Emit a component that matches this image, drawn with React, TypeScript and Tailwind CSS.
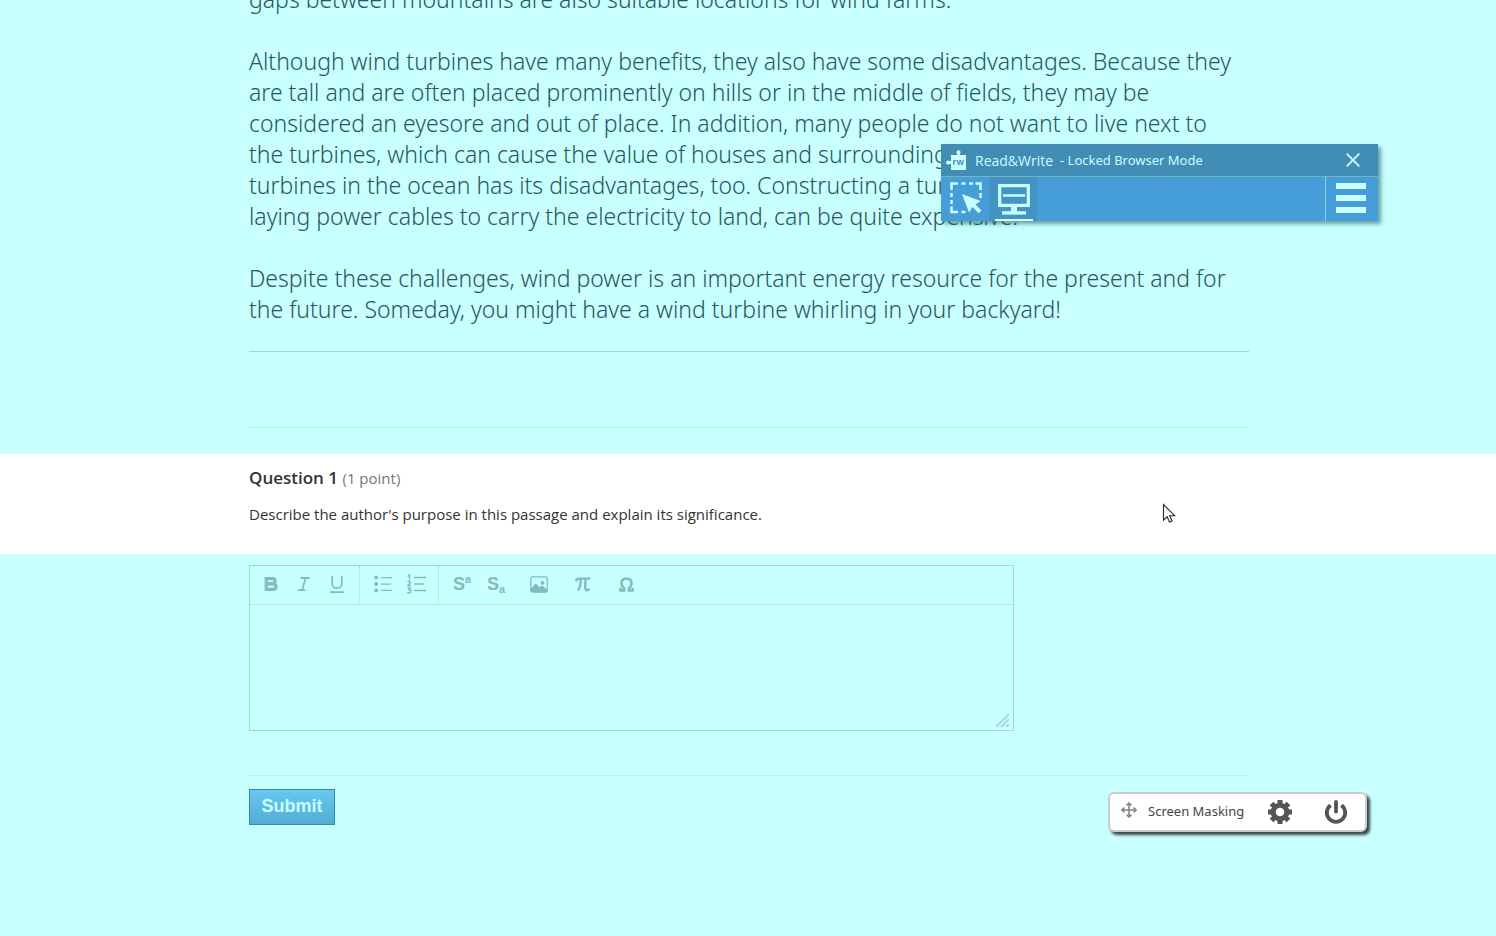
import { useState } from "react";

const paragraphs = [
  ["gaps between mountains are also suitable locations for wind farms."],
  [
    "Although wind turbines have many benefits, they also have some disadvantages. Because they",
    "are tall and are often placed prominently on hills or in the middle of fields, they may be",
    "considered an eyesore and out of place. In addition, many people do not want to live next to",
    "the turbines, which can cause the value of houses and surrounding land to drop. Placing",
    "turbines in the ocean has its disadvantages, too. Constructing a turbine in the ocean, and",
    "laying power cables to carry the electricity to land, can be quite expensive.",
  ],
  [
    "Despite these challenges, wind power is an important energy resource for the present and for",
    "the future. Someday, you might have a wind turbine whirling in your backyard!",
  ],
];

const Passage = () => (
  <article className="-mt-4 flex flex-col gap-[31px] font-['Noto_Sans','Open_Sans',sans-serif] text-[23px] leading-[31px] font-light text-[#28565b]">
    {paragraphs.map((lines, i) => (
      <p key={i} className="whitespace-nowrap">
        {lines.map((line) => (
          <span key={line} className="block">{line}</span>
        ))}
      </p>
    ))}
  </article>
);

const EditorToolbar = () => {
  const iconButton = "flex h-full items-center justify-center";

  return (
    <div className="flex h-[39px] items-stretch border-b border-dotted border-[#a3d6d8] text-[#83babb]">
      <div className="flex w-[110px] items-center border-r border-dotted border-[#a3d6d8] pb-0.5 pl-1">
        <button aria-label="Bold" className={`${iconButton} w-[34px]`}>
          <svg width="16" height="16" viewBox="0 0 16 16" fill="none" stroke="currentColor" strokeWidth="3.2">
            <path d="M3.2 2.7h6.4a2.5 2.5 0 0 1 0 5H4M4 8h6.4a2.6 2.6 0 0 1 0 5.3H3.2M3.2 1.1v13.8" />
          </svg>
        </button>
        <button aria-label="Italic" className={`${iconButton} w-[32px]`}>
          <svg width="14" height="16" viewBox="0 0 14 16" fill="none" stroke="currentColor" strokeWidth="1.8">
            <path d="M3.5 2h9M.5 14.2h8M8.6 2L5.2 14" />
          </svg>
        </button>
        <button aria-label="Underline" className={`${iconButton} w-[34px]`}>
          <svg width="14" height="18" viewBox="0 0 14 18" fill="none" stroke="currentColor" strokeWidth="1.7">
            <path d="M2.2 1v7.4a4.8 4.8 0 0 0 9.6 0V1M0 17.1h14" />
          </svg>
        </button>
      </div>
      <div className="flex w-[79px] items-center border-r border-dotted border-[#a3d6d8] pb-0.5 pl-[5px]">
        <button aria-label="Bulleted list" className={`${iconButton} w-[36px]`}>
          <svg width="18" height="18" viewBox="0 0 18 18" fill="currentColor">
            <circle cx="2.2" cy="2.6" r="2" />
            <circle cx="2.2" cy="9" r="2" />
            <circle cx="2.2" cy="15.4" r="2" />
            <path d="M7 2h11v1.3H7zM7 8.4h10v1.3H7zM7 14.8h11v1.3H7z" />
          </svg>
        </button>
        <button aria-label="Numbered list" className={`${iconButton} w-[31px]`}>
          <svg width="19" height="20" viewBox="0 0 19 20" fill="none" stroke="currentColor" strokeWidth="1.5">
            <path d="M7 3.5h12M7 10h10M7 16.5h12" strokeWidth="1.3" />
            <path d="M.8 1.8l1.7-.8v4.7M.6 7.9c1-1 3.2-.6 2.8.8C3.2 9.7.8 11 .8 11.8h3M.6 14.2h2.8L2 16c2.6-.1 2.4 3-.1 3-.7 0-1.2-.3-1.5-.7" />
          </svg>
        </button>
      </div>
      <div className="flex items-center pb-0.5 pl-1.5 font-['Liberation_Sans',Arial,sans-serif]">
        <button aria-label="Superscript" className={`${iconButton} w-[34px]`}>
          <span className="text-lg leading-5 font-bold">S</span>
          <span className="self-start pt-[7px] text-[11px] leading-3 font-bold">a</span>
        </button>
        <button aria-label="Subscript" className={`${iconButton} w-[34px]`}>
          <span className="text-lg leading-5 font-bold">S</span>
          <span className="self-end pb-[7px] text-[11px] leading-3 font-bold">a</span>
        </button>
        <button aria-label="Insert image" className={`${iconButton} w-[52px]`}>
          <svg width="18" height="17" viewBox="0 0 18 17">
            <rect x=".8" y=".8" width="16.4" height="15.4" rx="2" fill="none" stroke="currentColor" strokeWidth="1.3" />
            <circle cx="12.6" cy="6.8" r="1.9" fill="currentColor" />
            <path d="M1 12.5L5.8 7.6l3.8 3.7 2.4-2 5 4.2v1.7c0 .6-.5 1-1 1H2c-.6 0-1-.4-1-1z" fill="currentColor" />
          </svg>
        </button>
        <button aria-label="Insert equation" className={`${iconButton} w-9`}>
          <svg width="16" height="15" viewBox="0 0 16 15" fill="none" stroke="currentColor" strokeWidth="2.3">
            <path d="M1 4.4C1.4 2.3 2.3 1.6 4 1.6h11.4M5.7 1.8c0 5.5-.6 9.3-2.7 11.8M10.6 1.8c-.3 5.2-.6 8.6-.2 10.3.4 1.8 3 1.8 4-.6" />
          </svg>
        </button>
        <button aria-label="Insert symbol" className={`${iconButton} w-[50px]`}>
          <svg width="15" height="15" viewBox="0 0 15 15" fill="none" stroke="currentColor" strokeWidth="2.5">
            <path d="M1.4 11v2.4h3.8v-2.2C3.5 10.2 2.5 8.4 2.5 6.3c0-3 2-4.9 5-4.9s5 1.9 5 4.9c0 2.1-1 3.9-2.7 4.9v2.2h3.8V11" />
          </svg>
        </button>
      </div>
    </div>
  );
};

const ReadWriteToolbar = ({ onClose }: { onClose: () => void }) => (
  <div className="absolute top-36 left-[941px] z-10 w-[437px] bg-[#459ed8] font-['Noto_Sans','Open_Sans',sans-serif] text-[#c8ffff] shadow-[3px_3px_4px_rgba(40,100,100,0.6)]">
    <div className="flex h-[33px] items-center border-b border-[#72b5bd] bg-[#428db5] pr-[18px] pl-[5px] text-[13px]">
      <svg width="21" height="21" viewBox="0 0 21 21" fill="currentColor" aria-hidden="true">
        <path d="M5 5h6V3.6a2 2 0 1 1 3 0V5h6v15H5v-6H3.5a2 2 0 1 1 0-3H5z" />
        <text x="6.5" y="15" fontSize="9" fontWeight="600" fill="#428db5">rw</text>
      </svg>
      <span className="ml-2 w-[78px] pt-0.5 font-['Open_Sans',sans-serif] text-sm">Read&amp;Write</span>
      <span className="ml-[7px] flex-1 pt-0.5">-&nbsp;Locked Browser Mode</span>
      <button aria-label="Close" onClick={onClose}>
        <svg width="14" height="14" viewBox="0 0 14 14" stroke="currentColor" strokeWidth="1.8">
          <path d="M.7.7l12.6 12.6M13.3.7L.7 13.3" />
        </svg>
      </button>
    </div>
    <div className="flex h-11">
      <button aria-label="Screenshot reader" className="flex w-12 items-center justify-center pb-0.5 pl-0.5">
        <svg width="32" height="32" viewBox="0 0 32 32">
          <path d="M1.5 8V1.5H8M11.5 1.5h4M19 1.5h4M25.5 1.5h5V8M30.5 11v5M1.5 11v4M1.5 18v4M1.5 24.5V30H8M11.5 30h4" fill="none" stroke="currentColor" strokeWidth="2.5" />
          <path d="M12 12l18.5 7-5 3.5 6 6-2.8 2.8-6.2-6.2-3.5 5.4z" fill="currentColor" />
        </svg>
      </button>
      <button aria-label="Screen masking" className="flex w-12 flex-col items-center justify-end bg-[#4393c3] pl-0.5">
        <svg width="32" height="31" viewBox="0 0 32 31" fill="none" stroke="currentColor">
          <path d="M1.7 1.7h28.6v19.6H1.7z" strokeWidth="3.2" />
          <path d="M5 11.5h22" strokeWidth="2.5" />
          <path d="M16 21v7" strokeWidth="6" />
          <path d="M4 28.9h24" strokeWidth="3.4" />
        </svg>
        <span className="mt-1 h-0.5 w-[38px] bg-[#c8ffff]" />
      </button>
      <div className="flex-1" />
      <button aria-label="Menu" className="flex w-[53px] flex-col items-center justify-center gap-1.5 border-l border-[#8fd0e6] pr-0.5 pb-0.5">
        <span className="h-1.5 w-[30px] bg-[#c8ffff]" />
        <span className="h-1.5 w-[30px] bg-[#c8ffff]" />
        <span className="h-1.5 w-[30px] bg-[#c8ffff]" />
      </button>
    </div>
  </div>
);

const MaskingControls = ({ onPower }: { onPower: () => void }) => (
  <div className="absolute top-[792px] left-[1108px] z-10 flex h-10 w-[259px] items-center rounded-md border-2 border-[#ccc] bg-white pl-[11px] font-['Noto_Sans','Open_Sans',sans-serif] text-[#555] shadow-[3px_3px_3px_#384848]">
    <svg className="mb-1" width="16" height="16" viewBox="0 0 16 16" fill="none" stroke="#858585" strokeWidth="1.6" aria-hidden="true">
      <path d="M8 1v14M1 8h14M5.6 3.4L8 1l2.4 2.4M5.6 12.6L8 15l2.4-2.4M3.4 5.6L1 8l2.4 2.4M12.6 5.6L15 8l-2.4 2.4" />
    </svg>
    <span className="ml-[11px] w-[120px] text-[13px] text-[#444]">Screen Masking</span>
    <button aria-label="Masking settings">
      <svg width="24" height="24" viewBox="0 0 24 24" fill="none" stroke="currentColor">
        <circle cx="12" cy="12" r="6.8" strokeWidth="5" />
        <g strokeWidth="5">
          <path d="M12 0v4M12 20v4M0 12h4M20 12h4M3.5 3.5l3 3M17.5 17.5l3 3M3.5 20.5l3-3M17.5 6.5l3-3" />
        </g>
      </svg>
    </button>
    <button aria-label="Turn masking off" className="ml-8" onClick={onPower}>
      <svg width="24" height="24" viewBox="0 0 24 24" fill="none" stroke="currentColor" strokeWidth="3.8">
        <path d="M6.6 5.2a9.2 9.2 0 1 0 10.8 0" />
        <path d="M12 2v9.5" strokeLinecap="round" />
      </svg>
    </button>
  </div>
);

const App = () => {
  const [answer, setAnswer] = useState("");
  const [showToolbar, setShowToolbar] = useState(true);
  const [masked, setMasked] = useState(true);

  const column = "mx-auto w-full max-w-[1002px] pl-0.5";

  return (
    <main className={`relative min-h-screen overflow-hidden font-['Open_Sans',sans-serif] ${masked ? "bg-[#c8ffff]" : "bg-white"}`}>
      <div className={column}>
        <Passage />
        <hr className="mt-[26px] border-[#9dd5d7]" />
        <hr className="mt-[75px] border-[#b9f0f0]" />
      </div>

      {/* Reading window left clear by the mask */}
      <section className="mt-[26px] h-[100px] bg-white pt-3">
        <div className={column}>
          <h2 className="text-[17px] leading-6 font-semibold text-[#333]">
            Question 1 <span className="text-[15px] font-normal text-[#777]">(1 point)</span>
          </h2>
          <label htmlFor="answer" className="mt-3 block text-[15px] leading-6 text-[#333]">
            Describe the author's purpose in this passage and explain its significance.
          </label>
        </div>
      </section>

      <form className={`${column} pt-[11px]`} onSubmit={(e) => e.preventDefault()}>
        <div className="relative max-w-[765px] border border-[#a3d6d8]">
          <EditorToolbar />
          <textarea
            id="answer"
            value={answer}
            onChange={(e) => setAnswer(e.target.value)}
            className="block h-[125px] w-full resize-none p-2 text-[15px] text-[#37666b] outline-none"
          />
          <svg className="absolute right-1 bottom-[3px]" width="13" height="13" viewBox="0 0 13 13" stroke="#a3d6d8" strokeWidth="1.8" aria-hidden="true">
            <path d="M0 13L13 0M5 13l8-8M10 13l3-3" />
          </svg>
        </div>
        <hr className="mt-11 border-[#b9f0f0]" />
        <button
          type="submit"
          className="mt-[13px] h-9 w-[86px] border border-[#2f8f9f] bg-linear-to-b from-[#68c8ef] to-[#52add6] pb-0.5 font-['Liberation_Sans',Arial,sans-serif] text-lg leading-6 font-bold text-[#c8ffff]"
        >
          Submit
        </button>
      </form>

      {showToolbar && <ReadWriteToolbar onClose={() => setShowToolbar(false)} />}
      <MaskingControls onPower={() => setMasked(!masked)} />

      <svg className="pointer-events-none absolute top-[503px] left-[1162px]" width="14" height="21" viewBox="0 0 14 21" aria-hidden="true">
        <path d="M1.5 1.5v15.6l3.6-3.4 2.4 5.4 2.6-1.1-2.4-5.3h4.9z" fill="#fff" stroke="#222233" strokeWidth="1.1" />
      </svg>
    </main>
  );
};

export default App;
